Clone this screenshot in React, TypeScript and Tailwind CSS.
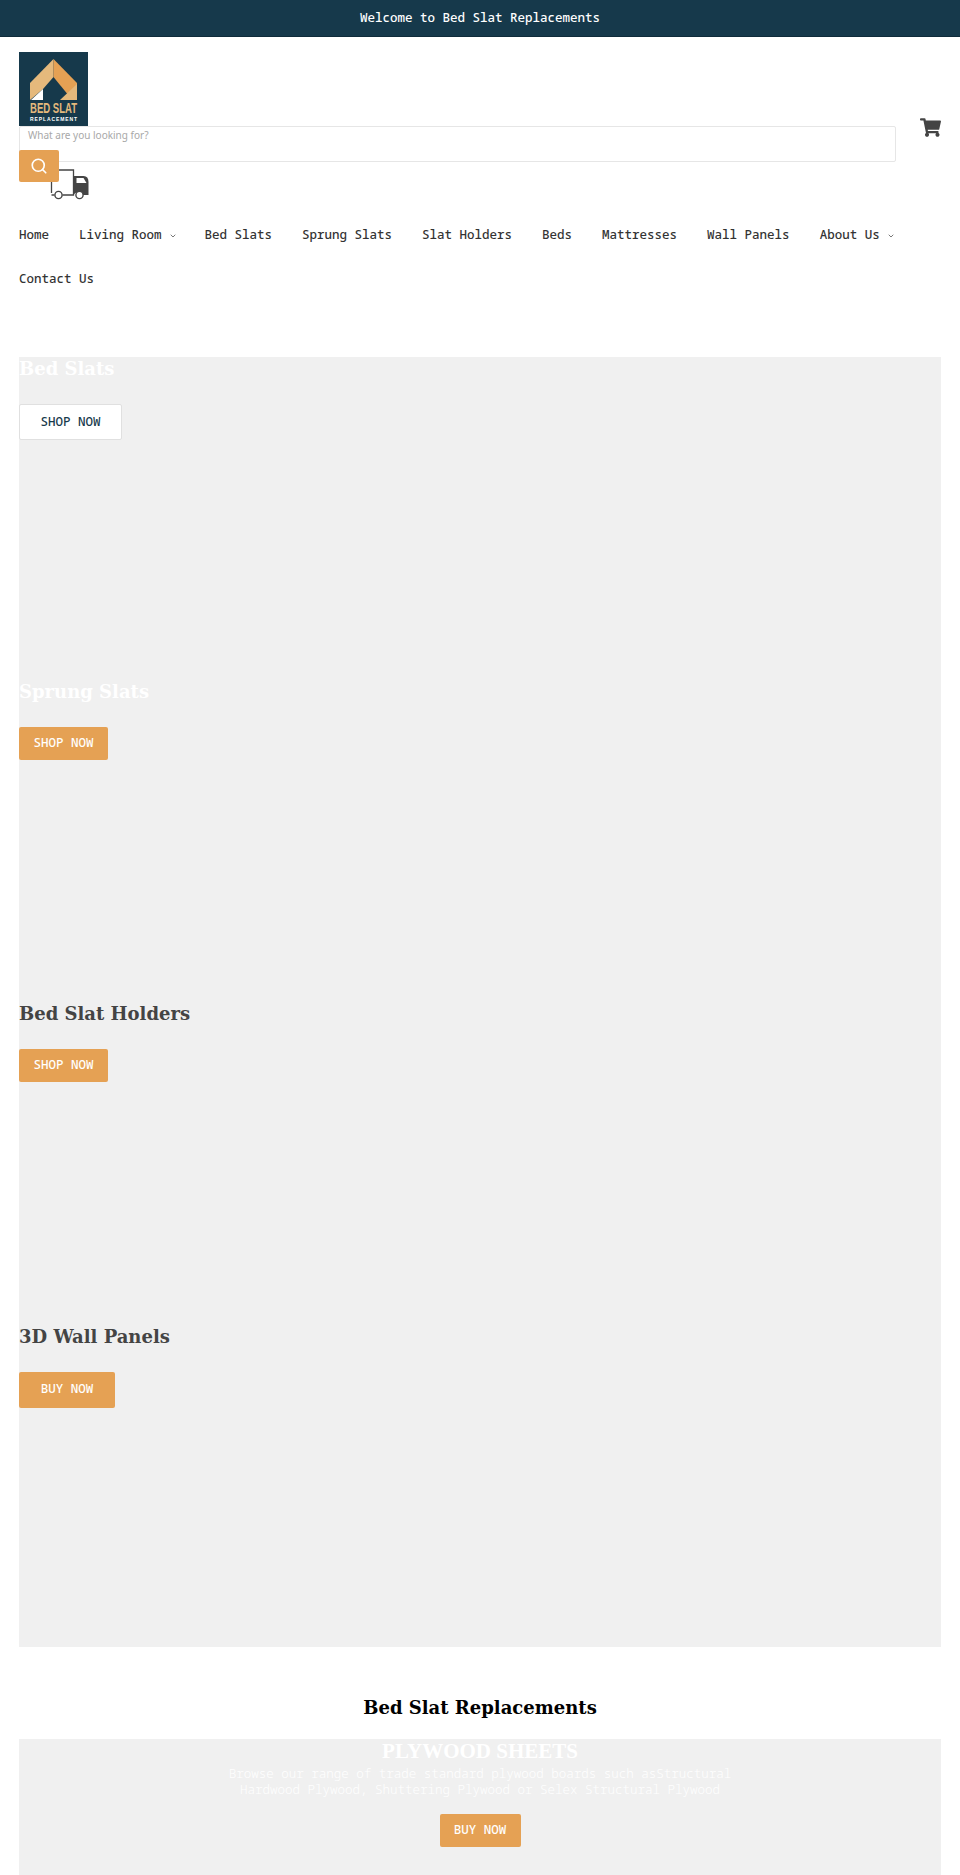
import { ChevronDown, Search } from "lucide-react";
import { FaShoppingCart } from "react-icons/fa";

const NAV = [
  { label: "Home" },
  { label: "Living Room", menu: true },
  { label: "Bed Slats" },
  { label: "Sprung Slats" },
  { label: "Slat Holders" },
  { label: "Beds" },
  { label: "Mattresses" },
  { label: "Wall Panels" },
  { label: "About Us", menu: true },
  { label: "Contact Us" },
];

const SLIDES = [
  { title: "Bed Slats", light: true, cta: "SHOP NOW", variant: "white" },
  { title: "Sprung Slats", light: true, cta: "SHOP NOW", variant: "small" },
  { title: "Bed Slat Holders", cta: "SHOP NOW", variant: "small" },
  { title: "3D Wall Panels", cta: "BUY NOW", variant: "large" },
];

const BUTTON: Record<string, string> = {
  white: "h-[36px] w-[103px] border border-[#e0e0e0] bg-white text-[#16394b]",
  small: "h-[33px] w-[89px] bg-[#e5a154] text-white",
  large: "h-[36px] w-[96px] bg-[#e5a154] text-white",
};

const Logo = () => (
  <svg width="69" height="74" viewBox="0 0 69 74" className="block">
    <rect width="69" height="74" fill="#16394b" />
    <path d="M34.5 7 L11 31 V48 L24 37 L34.5 25 Z" fill="#e5b97c" />
    <path d="M34.5 7 L58 31 V36 L50 44 L34.5 25 Z" fill="#e5a154" />
    <path d="M58 32 V48 H41 Z" fill="#e5b97c" />
    <path d="M12 48 L24 37 V48 Z" fill="#fff" />
    <text x="34.5" y="61" textAnchor="middle" textLength="47" lengthAdjust="spacingAndGlyphs" fontSize="15" fontWeight="700" fill="#e5b97c" fontFamily="'Liberation Sans',sans-serif">
      BED SLAT
    </text>
    <text x="34.5" y="69" textAnchor="middle" textLength="47" lengthAdjust="spacing" fontSize="5" fontWeight="700" fill="#fff" fontFamily="'Liberation Sans',sans-serif">
      REPLACEMENT
    </text>
  </svg>
);

const Truck = () => (
  <svg width="41" height="31" viewBox="0 0 40 31" className="ml-[-10px] mt-[19px] shrink-0">
    <path d="M2 24 V1 H24 V26 H13 M5 26 H2" fill="none" stroke="#444" strokeWidth="1.3" />
    <path d="M24 7 H34 Q39 7 39 13 V26 H33 A5 5 0 0 0 24 26 Z" fill="#444" />
    <path d="M27 9 H34 L37 14 H27 Z" fill="#fff" />
    <circle cx="9" cy="26" r="3.6" fill="#fff" stroke="#444" strokeWidth="1.4" />
    <circle cx="30" cy="26" r="3.6" fill="#fff" stroke="#444" strokeWidth="1.4" />
  </svg>
);

const App = () => {
  return (
    <div className="flex min-h-[1875px] flex-col overflow-hidden bg-white font-['Noto_Sans_Mono','DejaVu_Sans_Mono',monospace] text-[12.5px]">
      <div className="flex h-[37px] items-center justify-center border-b border-[#0f2b3a] bg-[#16394b] font-medium text-white">
        Welcome to Bed Slat Replacements
      </div>

      <header className="px-[19px] pt-[15px]">
        <Logo />
        <div className="flex items-start justify-between">
          <div>
            <div className="h-[36px] w-[877px] rounded-[2px] border border-[#e6e6e6] px-[8px] pt-[1px] font-['Noto_Sans',sans-serif] text-[10px] leading-[14px] text-[#a8a8a8]">
              What are you looking for?
            </div>
            <div className="mt-[-12px] flex items-start">
              <div className="relative z-10 flex h-[32px] w-[40px] items-center justify-center rounded-[2px] bg-[#e5a154]">
                <Search size={18} strokeWidth={2.2} color="#fff" />
              </div>
              <Truck />
            </div>
          </div>
          <FaShoppingCart size={21} className="mt-[-9px] text-[#444]" />
        </div>
      </header>

      <nav className="mt-[14px] flex flex-wrap px-[19px] font-medium text-[#333]">
        {NAV.map((item) => (
          <span key={item.label} className={`flex h-[43.5px] items-center ${item.menu ? "mr-[28px]" : "mr-[30px]"}`}>
            {item.label}
            {item.menu && <ChevronDown size={8} strokeWidth={2} className="ml-[7px]" />}
          </span>
        ))}
      </nav>

      <main className="mx-[19px] mt-[56px] h-[1290px] bg-[#f0f0f0]">
        {SLIDES.map((s) => (
          <section key={s.title} className="h-[322.5px]">
            <h2 className={`font-['DejaVu_Serif',serif] text-[18px] font-bold leading-[24px] ${s.light ? "text-white" : "text-[#444]"}`}>
              {s.title}
            </h2>
            <button className={`mt-[23px] block rounded-[2px] font-medium ${BUTTON[s.variant]}`}>
              {s.cta}
            </button>
          </section>
        ))}
      </main>

      <h2 className="mt-[48px] text-center font-['DejaVu_Serif',serif] text-[18px] font-bold leading-[26px] text-black">
        Bed Slat Replacements
      </h2>

      <section className="mx-[19px] mt-[18px] flex flex-1 flex-col items-center bg-[#f0f0f0] text-white">
        <h3 className="font-['Liberation_Serif',serif] text-[21px] font-bold leading-[24px]">
          PLYWOOD SHEETS
        </h3>
        <p className="mt-[3px] w-[520px] text-center font-light leading-[16px]">
          Browse our range of trade standard plywood boards such asStructural Hardwood Plywood, Shuttering Plywood or Selex Structural Plywood
        </p>
        <button className="mt-[16px] h-[33px] w-[81px] rounded-[2px] bg-[#e5a154] font-medium text-white">
          BUY NOW
        </button>
      </section>
    </div>
  );
};

export default App;
